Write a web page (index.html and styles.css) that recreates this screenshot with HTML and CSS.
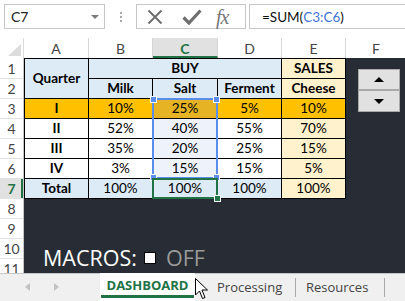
FILE: index.html
```html
<!DOCTYPE html>
<html>
<head>
<meta charset="utf-8">
<link rel="stylesheet" href="styles.css">
</head>
<body>
<div class="app">
  <div class="fbar">
    <div class="namebox"><span>C7</span><span class="dd"></span></div>
    <div class="grip"><i></i><i></i><i></i></div>
    <div class="tools">
      <svg class="ic-x" width="16" height="16" viewBox="0 0 16 16"><path d="M1.5 1.5 L14.5 14.5 M14.5 1.5 L1.5 14.5" stroke="#6f6f6f" stroke-width="2" fill="none"/></svg>
      <svg class="ic-ok" width="20" height="16" viewBox="0 0 20 16"><path d="M1.5 8.5 L7 14 L18.5 1.5" stroke="#6f6f6f" stroke-width="3.2" fill="none"/></svg>
      <span class="fx">fx</span>
    </div>
    <div class="formula">=SUM(<span class="ref">C3:C6</span>)</div>
  </div>

  <div class="sheet">
    <div class="corner"><span class="tri"></span></div>
    <div class="colheads">
      <div class="ch w65">A</div>
      <div class="ch w64">B</div>
      <div class="ch w65 cur">C</div>
      <div class="ch w64">D</div>
      <div class="ch w64">E</div>
      <div class="ch wf">F</div>
    </div>
    <div class="rowheads">
      <div class="rh">1</div>
      <div class="rh">2</div>
      <div class="rh">3</div>
      <div class="rh">4</div>
      <div class="rh">5</div>
      <div class="rh">6</div>
      <div class="rh cur">7</div>
      <div class="rh">8</div>
      <div class="rh">9</div>
      <div class="rh">10</div>
      <div class="rh">11</div>
    </div>
    <div class="body">
      <div class="top">
        <div class="tbl">
          <div class="c b bold quarter">Quarter</div>
          <div class="c b bold buy">BUY</div>
          <div class="c y bold">SALES</div>

          <div class="c b bold">Milk</div>
          <div class="c b bold">Salt</div>
          <div class="c b bold">Ferment</div>
          <div class="c y bold">Cheese</div>

          <div class="c o bold">I</div>
          <div class="c o">10%</div>
          <div class="c os">25%</div>
          <div class="c o">5%</div>
          <div class="c o">10%</div>

          <div class="c w bold">II</div>
          <div class="c w">52%</div>
          <div class="c ws">40%</div>
          <div class="c w">55%</div>
          <div class="c y">70%</div>

          <div class="c w bold">III</div>
          <div class="c w">35%</div>
          <div class="c ws">20%</div>
          <div class="c w">25%</div>
          <div class="c y">15%</div>

          <div class="c w bold">IV</div>
          <div class="c w">3%</div>
          <div class="c ws">15%</div>
          <div class="c w">15%</div>
          <div class="c y">5%</div>

          <div class="c b bold">Total</div>
          <div class="c b">100%</div>
          <div class="c b">100%</div>
          <div class="c b">100%</div>
          <div class="c y">100%</div>

          <div class="selbox"><i class="h tl"></i><i class="h tr"></i><i class="h bl"></i><i class="h br"></i></div>
          <div class="active"><i class="fill"></i></div>
        </div>
        <div class="fcol">
          <div class="spin">
            <div class="btn up"><span></span></div>
            <div class="btn down"><span></span></div>
          </div>
        </div>
      </div>
      <div class="macros"><span>MACROS:</span><span class="cb"></span><span class="off">OFF</span></div>
    </div>
  </div>

  <div class="tabs">
    <div class="nav"><span class="al"></span><span class="ar"></span></div>
    <div class="tab-on"><div class="tab-ul">DASHBOARD</div></div>
    <div class="tab-off t1">Processing</div>
    <div class="sep"></div>
    <div class="tab-off t2">Resources</div>
    <div class="sep"></div>
    <svg class="cursor" width="14" height="22" viewBox="0 0 14 22"><path d="M0.5 0.5 L0.5 17 L4.5 13 L7.5 20.5 L10 19.5 L7 12 L12.5 12 Z" fill="#fff" stroke="#000" stroke-width="1" stroke-linejoin="round"/></svg>
  </div>
</div>
</body>
</html>
```
FILE: styles.css
```css
*{box-sizing:border-box;margin:0;padding:0}
html,body{width:405px;height:301px;overflow:hidden;background:#fff}
body{font-family:"Lato","Liberation Sans",sans-serif;color:#000}
.app{display:flex;flex-direction:column;height:301px;width:405px;overflow:hidden}

/* formula bar */
.fbar{height:38px;flex:none;display:flex;align-items:flex-start;padding:4px 0 0 4px}
.namebox{width:101px;height:25px;border:1px solid #c6c6c6;display:flex;align-items:center;justify-content:space-between;padding:0 5px 0 6px;font-size:14px;color:#222}
.dd{width:0;height:0;border-left:4px solid transparent;border-right:4px solid transparent;border-top:4px solid #7a7a7a}
.grip{width:31px;height:25px;display:flex;flex-direction:column;align-items:center;justify-content:center;gap:2px}
.grip i{width:2px;height:2px;background:#a8a8a8;display:block}
.tools{width:110px;height:25px;border:1px solid #c6c6c6;display:flex;align-items:center;padding-left:10px}
.ic-ok{margin-left:19px}
.fx{margin-left:14px;font-family:"Liberation Serif",serif;font-style:italic;font-size:20px;color:#777;line-height:20px;letter-spacing:-1px}
.formula{flex:1;height:25px;margin-left:3px;border:1px solid #c6c6c6;border-right:none;display:flex;align-items:center;padding-left:12px;font-size:13.5px;color:#111}
.ref{color:#3f74d4}

/* sheet */
.sheet{height:235px;flex:none;display:grid;grid-template-columns:24px 381px;grid-template-rows:20px 215px;overflow:hidden}
.corner{position:relative;border-right:1px solid #dadada}
.tri{position:absolute;right:2px;bottom:2px;width:0;height:0;border-left:13px solid transparent;border-bottom:12px solid #dcdcdc}
.colheads{display:flex}
.ch{height:20px;flex:none;display:flex;align-items:center;justify-content:center;font-size:14px;color:#444;border-right:1px solid #d6d6d6}
.w65{width:65px}
.w64{width:64px}
.wf{width:60px;border-right:none}
.ch.cur{background:#e1e1e1;color:#217346;font-weight:700;border-bottom:2px solid #217346;padding-top:2px}
.rowheads{padding-top:1px;display:flex;flex-direction:column;border-right:1px solid #c6c6c6;overflow:hidden}
.rh{height:20px;flex:none;display:flex;align-items:center;justify-content:center;font-size:14px;color:#444;border-bottom:1px solid #e2e2e2}
.rh.cur{background:#e1e1e1;color:#217346;font-weight:700;box-shadow:inset -2px 0 0 #217346}

.body{background:#282d35;overflow:hidden;display:flex;flex-direction:column}
.top{display:flex;align-items:flex-start}
.tbl{position:relative;flex:none;width:322px;display:grid;grid-template-columns:63px 63px 64px 63px 63px;grid-auto-rows:19px;gap:1px;padding:1px;background:#000}
.c{display:flex;align-items:center;justify-content:center;font-size:13.5px;line-height:19px}
.bold{font-weight:700}
.quarter{grid-row:span 2}
.buy{grid-column:span 3}
.b{background:#ddebf7}
.y{background:#fff2cc}
.o{background:#ffc000}
.os{background:#e6b324}
.w{background:#fff}
.ws{background:#eef2fb}

.selbox{position:absolute;left:128px;top:40px;width:66px;height:81px;border:2px solid #5b8dea}
.active{position:absolute;left:128px;top:120px;width:66px;height:21px;border:2px solid #217346}
.h{position:absolute;width:5px;height:5px;background:#5b8dea;box-shadow:0 0 0 1px #fff}
.tl{left:-3px;top:-3px}
.tr{right:-3px;top:-3px}
.bl{left:-3px;bottom:-3px}
.br{right:-3px;bottom:-3px}
.fill{position:absolute;right:-4px;bottom:-4px;width:5px;height:5px;background:#217346;box-shadow:0 0 0 1px #fff}

.fcol{width:59px;flex:none;padding:11px 0 0 12px}
.spin{width:42px;display:flex;flex-direction:column}
.btn{background:#e1e1e1;border:1px solid #a9a9a9;display:flex;align-items:center;justify-content:center}
.up{height:21px}
.down{height:22px}
.up span{width:0;height:0;border-left:5px solid transparent;border-right:5px solid transparent;border-bottom:5px solid #000}
.down span{width:0;height:0;border-left:5px solid transparent;border-right:5px solid transparent;border-top:5px solid #000}

.macros{margin-top:46px;padding-left:19px;display:flex;align-items:center;font-family:"Open Sans",sans-serif;font-size:21.5px;line-height:25px;color:#fff}
.cb{width:12px;height:12px;background:#fff;border:1px solid #000;margin:1px 10px 0 7px;flex:none}
.off{color:#9a9a9a}

/* tabs */
.tabs{height:28px;flex:none;position:relative;background:#f0f0f0;border-top:1px solid #c6c6c6;display:flex;font-family:"Open Sans",sans-serif;font-size:13px;color:#444}
.nav{width:100px;height:27px;flex:none;position:relative}
.al{position:absolute;left:25px;top:9px;width:0;height:0;border-top:4px solid transparent;border-bottom:4px solid transparent;border-right:5px solid #c2c2c2}
.ar{position:absolute;left:54px;top:9px;width:0;height:0;border-top:4px solid transparent;border-bottom:4px solid transparent;border-left:5px solid #c2c2c2}
.tab-on{width:95px;height:28px;flex:none;margin-top:-1px;background:#fff;padding:0 1px}
.tab-ul{height:25px;line-height:22px;text-align:center;border-bottom:3px solid #217346;color:#217346;font-weight:700;font-size:13px;padding-top:1px}
.tab-off{height:27px;line-height:26px;flex:none}
.t1{padding-left:22px;width:100px}
.t2{padding-left:10px;width:88px}
.sep{width:1px;height:19px;margin-top:4px;background:#a8a8a8;flex:none}
.cursor{position:absolute;left:195px;top:4px}
```
